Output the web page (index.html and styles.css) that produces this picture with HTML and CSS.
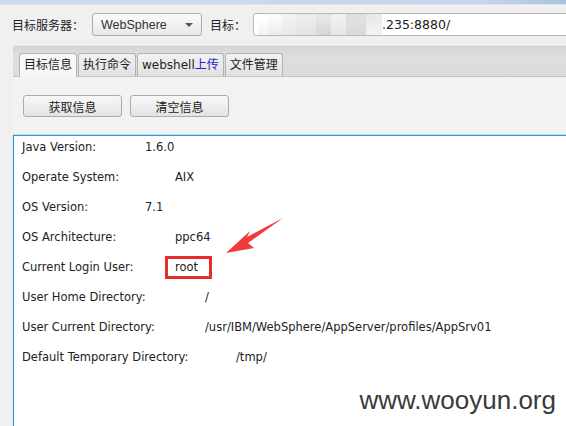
FILE: index.html
```html
<!DOCTYPE html>
<html lang="zh-CN">
<head>
<meta charset="utf-8">
<title>目标信息</title>
<link rel="stylesheet" href="styles.css">
</head>
<body>
<div class="window">
  <div class="titlebar"></div>
  <div class="toolbar">
    <span class="label">目标服务器：</span>
    <div class="combo"><span class="combo-text">WebSphere</span><span class="combo-arrow"></span></div>
    <span class="label label-target">目标：</span>
    <div class="field">
      <div class="mosaic">
        <span class="m m1"></span><span class="m m2"></span><span class="m m3"></span><span class="m m4"></span><span class="m m5"></span><span class="m m6"></span><span class="m m7"></span><span class="m m8"></span>
      </div>
      <span class="field-text">.235:8880/</span>
    </div>
  </div>
  <div class="tabpane">
    <div class="tabstrip">
      <div class="tab active">目标信息</div>
      <div class="tab">执行命令</div>
      <div class="tab">webshell<span class="blue">上传</span></div>
      <div class="tab">文件管理</div>
    </div>
    <div class="panel">
      <div class="buttons">
        <button class="btn">获取信息</button>
        <button class="btn">清空信息</button>
      </div>
      <div class="output">
        <div class="row"><span class="key w123">Java Version:</span><span>1.6.0</span></div>
        <div class="row"><span class="key w153">Operate System:</span><span>AIX</span></div>
        <div class="row"><span class="key w123">OS Version:</span><span>7.1</span></div>
        <div class="row"><span class="key w153">OS Architecture:</span><span>ppc64</span></div>
        <div class="row"><span class="key w153">Current Login User:</span><span>root</span></div>
        <div class="row"><span class="key w183">User Home Directory:</span><span>/</span></div>
        <div class="row"><span class="key w183">User Current Directory:</span><span>/usr/IBM/WebSphere/AppServer/profiles/AppSrv01</span></div>
        <div class="row"><span class="key w214">Default Temporary Directory:</span><span>/tmp/</span></div>
        <div class="redbox"></div>
        <svg class="arrow" width="60" height="40" viewBox="0 0 60 40">
          <polygon points="57,1 21,20 24,14 0,36 28,31 22,26" fill="#ef3b3b"/>
        </svg>
      </div>
    </div>
  </div>
  <div class="watermark">www.wooyun.org</div>
</div>
</body>
</html>
```

FILE: styles.css
```css
html, body {
  margin: 0;
  padding: 0;
}
body {
  width: 566px;
  height: 426px;
  overflow: hidden;
  background: #f0f0f0;
  font-family: "DejaVu Sans", "Noto Sans CJK SC", sans-serif;
  color: #222;
}
.window {
  position: relative;
  width: 566px;
  height: 426px;
  overflow: hidden;
}
.titlebar {
  height: 4px;
  background: linear-gradient(to right, #cddbec, #c6d6ea 85%, #a9c2e0);
  border-bottom: 1px solid #dfe6ef;
}
.toolbar {
  display: flex;
  align-items: center;
  height: 23px;
  margin-top: 8px;
  padding-left: 12px;
}
.label {
  flex: none;
  font-family: "Noto Sans CJK SC", sans-serif;
  font-size: 12px;
  color: #222;
  white-space: nowrap;
}
.combo {
  box-sizing: border-box;
  flex: none;
  display: flex;
  align-items: center;
  justify-content: space-between;
  width: 110px;
  height: 23px;
  margin-left: 8px;
  padding: 0 8px 0 8px;
  border: 1px solid #adadad;
  border-radius: 3px;
  background: linear-gradient(#fbfbfb, #e8e8e8);
}
.combo-text {
  font-family: "Liberation Sans", sans-serif;
  font-size: 12.5px;
  color: #333;
}
.combo-arrow {
  width: 0;
  height: 0;
  border-left: 4px solid transparent;
  border-right: 4px solid transparent;
  border-top: 4px solid #555;
}
.label-target {
  margin-left: 8px;
}
.field {
  box-sizing: border-box;
  display: flex;
  align-items: center;
  flex: none;
  width: 330px;
  height: 23px;
  margin-left: 7px;
  border: 1px solid #b9b9b9;
  border-radius: 3px;
  background: #fff;
  overflow: hidden;
}
.mosaic {
  display: flex;
  height: 21px;
  margin-left: 4px;
}
.m { display: block; height: 21px; }
.m1 { width: 10px; background: linear-gradient(#fff 20%, #f1f1f1); }
.m2 { width: 14px; background: linear-gradient(#fafafa 20%, #ececec); }
.m3 { width: 14px; background: linear-gradient(#f2f2f2 20%, #e9e9e9); }
.m4 { width: 20px; background: linear-gradient(#ececec 20%, #e3e3e3); }
.m5 { width: 15px; background: linear-gradient(#e6e6e6 20%, #d6d6d6); }
.m6 { width: 15px; background: linear-gradient(#f0f0f0 20%, #e6e6e6); }
.m7 { width: 20px; background: linear-gradient(#e0e0e0 20%, #d9d9d9); }
.m8 { width: 16px; background: linear-gradient(#e9e9e9 20%, #f4f4f4); }
.field-text {
  margin-left: 0;
  font-size: 12.5px;
  color: #222;
}
.tabpane {
  margin-top: 9px;
  margin-left: 13px;
}
.tabstrip {
  display: flex;
  gap: 1px;
  height: 23px;
  padding: 7px 0 0 6px;
  background: linear-gradient(#d4d4d4, #dedede 30%, #dcdcdc);
  border-top: 1px solid #e6e6e6;
  border-bottom: 1px solid #c4c4c4;
}
.tab {
  box-sizing: border-box;
  height: 23px;
  padding: 0 4px;
  border: 1px solid #b4b4b4;
  border-bottom: none;
  border-radius: 3px 3px 0 0;
  background: linear-gradient(#f2f2f2, #e1e1e1);
  font-size: 12px;
  line-height: 22px;
  color: #222;
  white-space: nowrap;
}
.tab.active {
  background: #f7f7f7;
  height: 24px;
  margin-bottom: -1px;
}
.blue { color: #2424c8; }
.panel {
  background: #f2f2f2;
}
.buttons {
  display: flex;
  gap: 8px;
  padding: 18px 0 0 10px;
}
.btn {
  box-sizing: border-box;
  width: 99px;
  height: 22px;
  margin: 0;
  padding: 0;
  border: 1px solid #acacac;
  border-radius: 3px;
  background: linear-gradient(#f8f8f8, #e3e3e3);
  font-family: "Noto Sans CJK SC", sans-serif;
  font-size: 12px;
  color: #222;
}
.output {
  position: relative;
  margin-top: 18px;
  height: 300px;
  padding: 2px 0 0 8px;
  background: #fff;
  border-top: 1px solid #2f9bd6;
  border-left: 1px solid #2f9bd6;
  box-shadow: 0 -1px 0 #b9dcf0, -1px 0 0 #cfe6f4;
  font-size: 11.5px;
  color: #222;
}
.row {
  display: flex;
  height: 18px;
  line-height: 18px;
  margin-bottom: 12px;
  white-space: nowrap;
}
.key { display: inline-block; flex: none; }
.w123 { width: 123px; }
.w153 { width: 153px; }
.w183 { width: 183px; }
.w214 { width: 214px; }
.redbox {
  position: absolute;
  left: 151px;
  top: 120px;
  width: 47px;
  height: 23px;
  box-sizing: border-box;
  border: 3px solid #e82c2c;
}
.arrow {
  position: absolute;
  left: 212px;
  top: 81px;
}
.watermark {
  position: absolute;
  right: 10px;
  top: 385px;
  font-family: "Liberation Sans", sans-serif;
  font-size: 26px;
  line-height: 30px;
  color: #3a3a3a;
}
```
